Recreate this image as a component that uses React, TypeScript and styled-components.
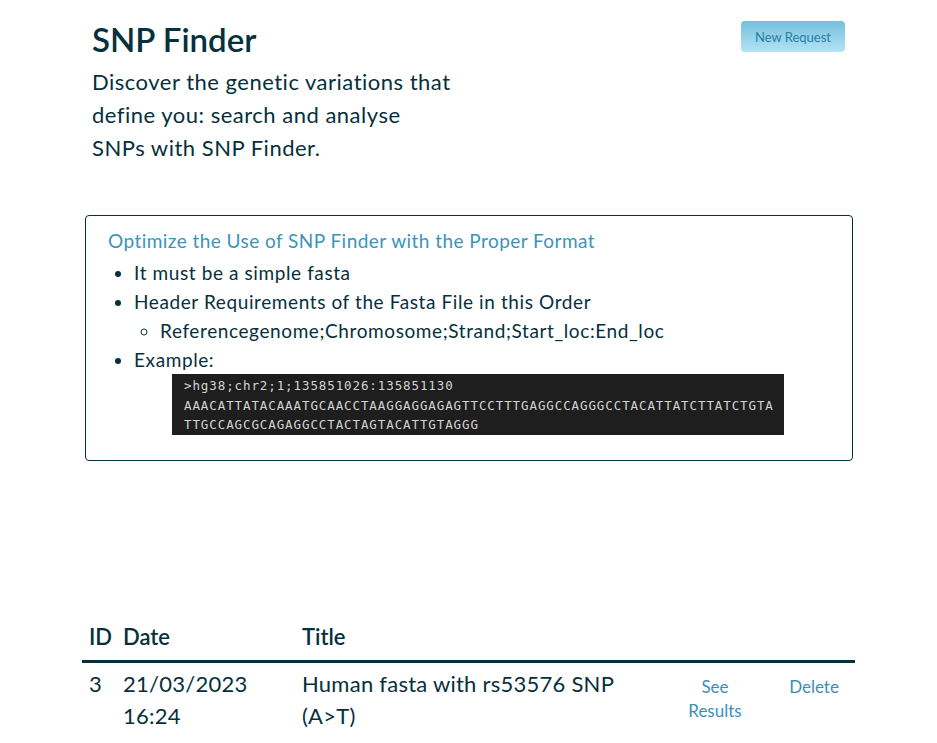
import React from "react";
import styled, { createGlobalStyle } from "styled-components";

const GlobalStyle = createGlobalStyle`
  html, body { margin: 0; padding: 0; background: #ffffff; }
  body { font-family: "Lato", "Noto Sans", sans-serif; color: #06303c; }
  * { box-sizing: border-box; }
`;

const Page = styled.div`
  width: 773px;
  margin: 0 auto;
  padding-top: 17px;
`;

const Header = styled.header`
  display: flex;
  justify-content: space-between;
  align-items: flex-start;
  padding: 0 10px;
`;

const Intro = styled.div`
  width: 362px;
`;

const Title = styled.h1`
  margin: 0;
  font-size: 33px;
  line-height: 44px;
  font-weight: 600;
  color: #06303c;
`;

const Lead = styled.p`
  margin: 4px 0 0;
  font-size: 22px;
  line-height: 33px;
  letter-spacing: 0.5px;
  font-weight: 400;
  color: #06303c;
`;

const NewButton = styled.button`
  margin-top: 4px;
  width: 104px;
  height: 31px;
  border: none;
  border-radius: 4px;
  background: linear-gradient(180deg, #74c0dc 0%, #b3e3f6 100%);
  color: #2a7ea4;
  font-family: inherit;
  font-size: 13px;
  cursor: pointer;
`;

const InfoBox = styled.section`
  margin: 51px 2px 0 3px;
  border: 1px solid #06303c;
  border-radius: 4px;
  padding: 12px 22px 25px;
`;

const InfoTitle = styled.h2`
  margin: 0;
  font-size: 19px;
  line-height: 26px;
  letter-spacing: 0.45px;
  font-weight: 400;
  color: #3a95b9;
`;

const List = styled.ul`
  margin: 4px 0 0;
  padding-left: 26px;
  font-size: 19px;
  line-height: 29px;
  letter-spacing: 0.6px;
  list-style: disc;
`;

const SubList = styled.ul`
  margin: 0;
  padding-left: 26px;
  list-style: circle;
`;

const Code = styled.pre`
  margin: 0 0 0 38px;
  width: 612px;
  background: #1e1e1e;
  color: #d4d4d4;
  padding: 2px 0 0 12px;
  font-family: "DejaVu Sans Mono", monospace;
  font-size: 12.5px;
  letter-spacing: 0.9px;
  line-height: 19.5px;
  white-space: pre;
  overflow: hidden;
`;

const Table = styled.div`
  margin-top: 152px;
`;

const Row = styled.div<{ $head?: boolean }>`
  display: grid;
  grid-template-columns: 34px 179px 370px 100px 90px;
  padding: ${(p) => (p.$head ? "8px 0 7px" : "5px 0 11px")};
  border-bottom: ${(p) => (p.$head ? "3px solid #06303c" : "1px solid #dfe3e8")};
  font-size: 22px;
  line-height: 32px;
  letter-spacing: ${(p) => (p.$head ? "0" : "0.25px")};
  font-weight: ${(p) => (p.$head ? 600 : 400)};
`;

const Cell = styled.div`
  padding-left: 7px;
`;

const ActionCell = styled.div<{ $shift?: number }>`
  display: flex;
  justify-content: center;
  align-items: flex-start;
  padding-top: 7px;
  padding-left: ${(p) => p.$shift ?? 0}px;
`;

const ActionLink = styled.a`
  color: #3a8fb7;
  font-size: 17px;
  line-height: 24px;
  letter-spacing: 0;
  text-align: center;
  text-decoration: none;
  cursor: pointer;
`;

export default function App() {
  return (
    <>
      <GlobalStyle />
      <Page>
        <Header>
          <Intro>
            <Title>SNP Finder</Title>
            <Lead>
              Discover the genetic variations that define you: search and analyse SNPs with SNP
              Finder.
            </Lead>
          </Intro>
          <NewButton>New Request</NewButton>
        </Header>

        <InfoBox>
          <InfoTitle>Optimize the Use of SNP Finder with the Proper Format</InfoTitle>
          <List>
            <li>It must be a simple fasta</li>
            <li>
              Header Requirements of the Fasta File in this Order
              <SubList>
                <li>Referencegenome;Chromosome;Strand;Start_loc:End_loc</li>
              </SubList>
            </li>
            <li>
              Example:
              <Code>
                {">hg38;chr2;1;135851026:135851130\nAAACATTATACAAATGCAACCTAAGGAGGAGAGTTCCTTTGAGGCCAGGGCCTACATTATCTTATCTGTA\nTTGCCAGCGCAGAGGCCTACTAGTACATTGTAGGG"}
              </Code>
            </li>
          </List>
        </InfoBox>

        <Table>
          <Row $head>
            <Cell>ID</Cell>
            <Cell>Date</Cell>
            <Cell>Title</Cell>
            <Cell />
            <Cell />
          </Row>
          <Row>
            <Cell>3</Cell>
            <Cell>
              21/03/2023
              <br />
              16:24
            </Cell>
            <Cell>Human fasta with rs53576 SNP (A&gt;T)</Cell>
            <ActionCell>
              <ActionLink>
                See
                <br />
                Results
              </ActionLink>
            </ActionCell>
            <ActionCell $shift={8}>
              <ActionLink>Delete</ActionLink>
            </ActionCell>
          </Row>
        </Table>
      </Page>
    </>
  );
}
